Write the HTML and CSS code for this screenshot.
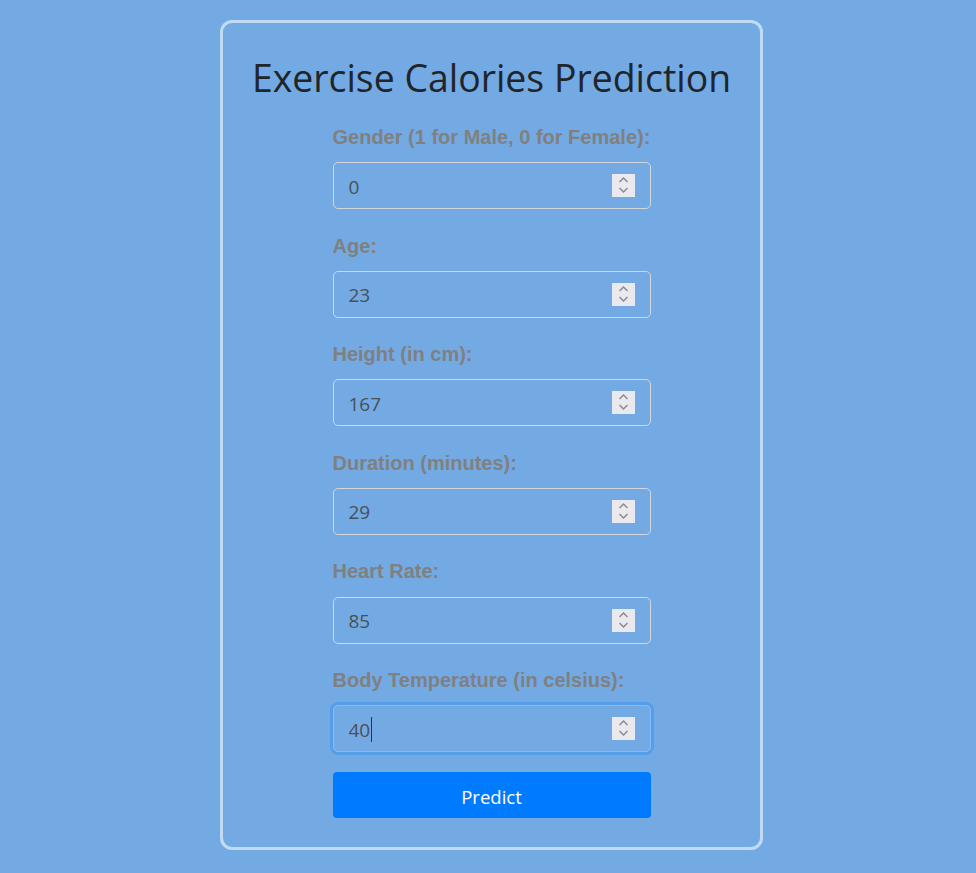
FILE: index.html
```html
<!DOCTYPE html>
<html lang="en">
<head>
<meta charset="utf-8">
<title>Exercise Calories Prediction</title>
<link rel="stylesheet" href="styles.css">
</head>
<body>
<div class="card">
  <h1 class="title">Exercise Calories Prediction</h1>
  <form class="form">
    <div class="group">
      <label class="label" for="gender">Gender (1 for Male, 0 for Female):</label>
      <div class="field">
        <input class="input" id="gender" type="number" value="0">
        <span class="spin"><svg width="23" height="23" viewBox="0 0 23 23"><path d="M7.5 8 L11.5 4 L15.5 8" /><path d="M7.5 14 L11.5 18 L15.5 14" /></svg></span>
      </div>
    </div>
    <div class="group">
      <label class="label" for="age">Age:</label>
      <div class="field">
        <input class="input" id="age" type="number" value="23">
        <span class="spin"><svg width="23" height="23" viewBox="0 0 23 23"><path d="M7.5 8 L11.5 4 L15.5 8" /><path d="M7.5 14 L11.5 18 L15.5 14" /></svg></span>
      </div>
    </div>
    <div class="group">
      <label class="label" for="height">Height (in cm):</label>
      <div class="field">
        <input class="input" id="height" type="number" value="167">
        <span class="spin"><svg width="23" height="23" viewBox="0 0 23 23"><path d="M7.5 8 L11.5 4 L15.5 8" /><path d="M7.5 14 L11.5 18 L15.5 14" /></svg></span>
      </div>
    </div>
    <div class="group">
      <label class="label" for="duration">Duration (minutes):</label>
      <div class="field">
        <input class="input" id="duration" type="number" value="29">
        <span class="spin"><svg width="23" height="23" viewBox="0 0 23 23"><path d="M7.5 8 L11.5 4 L15.5 8" /><path d="M7.5 14 L11.5 18 L15.5 14" /></svg></span>
      </div>
    </div>
    <div class="group">
      <label class="label" for="heart">Heart Rate:</label>
      <div class="field">
        <input class="input" id="heart" type="number" value="85">
        <span class="spin"><svg width="23" height="23" viewBox="0 0 23 23"><path d="M7.5 8 L11.5 4 L15.5 8" /><path d="M7.5 14 L11.5 18 L15.5 14" /></svg></span>
      </div>
    </div>
    <div class="group group-last">
      <label class="label" for="temp">Body Temperature (in celsius):</label>
      <div class="field">
        <input class="input input-focus" id="temp" type="number" value="40">
        <span class="caret"></span>
        <span class="spin"><svg width="23" height="23" viewBox="0 0 23 23"><path d="M7.5 8 L11.5 4 L15.5 8" /><path d="M7.5 14 L11.5 18 L15.5 14" /></svg></span>
      </div>
    </div>
    <button class="btn" type="button">Predict</button>
  </form>
</div>
</body>
</html>
```

FILE: styles.css
```css
html, body {
  margin: 0;
  padding: 0;
}
body {
  background: #73aae3;
  font-family: "Open Sans", "Noto Sans", sans-serif;
  padding-left: 6px;
}
.card {
  box-sizing: border-box;
  width: 543px;
  margin: 20px auto 0;
  border: 3px solid #c2dbf5;
  border-radius: 12px;
  padding: 33px 20px 29px 21px;
}
.title {
  margin: 0;
  text-align: center;
  font-family: "Open Sans", sans-serif;
  font-weight: 400;
  font-size: 37.4px;
  line-height: 44px;
  color: #212529;
}
.form {
  width: 318px;
  margin: 25px auto 0;
  display: flex;
  flex-direction: column;
}
.group {
  display: flex;
  flex-direction: column;
  margin-bottom: 24.4px;
}
.group-last {
  margin-bottom: 20px;
}
.label {
  font-family: "Liberation Sans", Arial, sans-serif;
  font-weight: 700;
  font-size: 20px;
  line-height: 24px;
  color: #808080;
  margin-bottom: 13.2px;
  white-space: nowrap;
}
.field {
  position: relative;
}
.input {
  box-sizing: border-box;
  display: block;
  width: 100%;
  height: 47px;
  padding: 2px 15px 0;
  border: 1px solid #d3d6dc;
  border-radius: 5px;
  background: transparent;
  font-family: "Open Sans", sans-serif;
  font-size: 19px;
  color: #495057;
  outline: none;
  -moz-appearance: textfield;
}
.input::-webkit-inner-spin-button,
.input::-webkit-outer-spin-button {
  -webkit-appearance: none;
  margin: 0;
}
.input-focus {
  border-color: #80bdff;
  box-shadow: 0 0 0 3px rgba(0, 123, 255, 0.25);
}
.caret {
  position: absolute;
  left: 38px;
  top: 12px;
  width: 1px;
  height: 25px;
  background: #333;
}
.spin {
  position: absolute;
  right: 16px;
  top: 12px;
  width: 23px;
  height: 23px;
  background: #e9e9ee;
  display: block;
}
.spin svg {
  display: block;
}
.spin path {
  fill: none;
  stroke: #8b8b96;
  stroke-width: 1.5;
}
.btn {
  display: block;
  width: 100%;
  height: 46px;
  padding: 2px 0 0;
  border: 0;
  border-radius: 4px;
  background: #007bff;
  color: #fff;
  font-family: "Open Sans", sans-serif;
  font-size: 18.5px;
  cursor: pointer;
}
```
